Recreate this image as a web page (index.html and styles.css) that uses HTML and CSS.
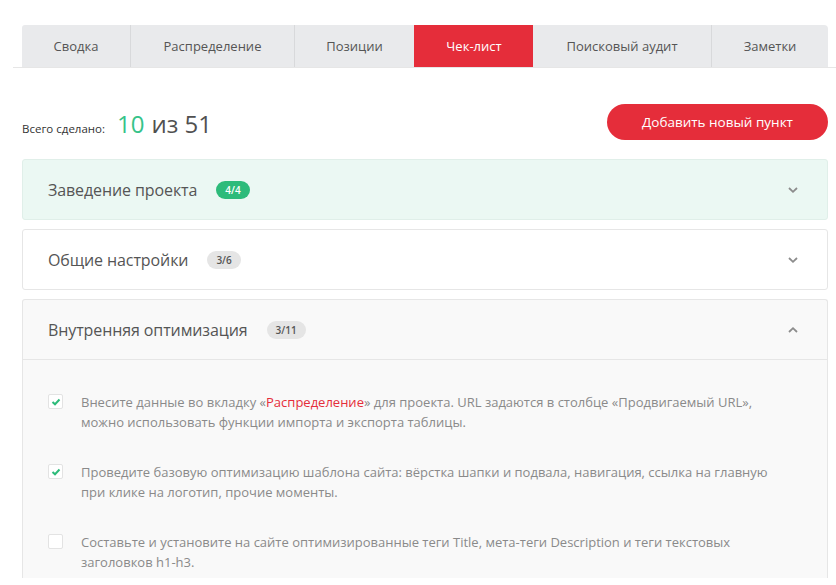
FILE: index.html
```html
<!DOCTYPE html>
<html lang="ru">
<head>
<meta charset="utf-8">
<link rel="stylesheet" href="styles.css">
</head>
<body>
<div class="page">
  <div class="tabs-bar">
    <div class="tabs">
      <div class="tab t1">Сводка</div>
      <div class="tab t2">Распределение</div>
      <div class="tab t3">Позиции</div>
      <div class="tab t4 active">Чек-лист</div>
      <div class="tab t5">Поисковый аудит</div>
      <div class="tab t6">Заметки</div>
    </div>
  </div>
  <div class="content">
    <div class="summary">
      <div class="total">
        <span class="total-label">Всего сделано:</span>
        <span class="total-done">10</span>
        <span class="total-all">из 51</span>
      </div>
      <button class="add-btn">Добавить новый пункт</button>
    </div>

    <div class="panel panel-done">
      <div class="panel-head">
        <span class="panel-title">Заведение проекта</span>
        <span class="badge badge-green">4/4</span>
        <svg class="chev" width="12" height="8" viewBox="0 0 12 8"><path d="M2 2 L6 5.8 L10 2" fill="none" stroke="#8c8c8c" stroke-width="1.8"/></svg>
      </div>
    </div>

    <div class="panel">
      <div class="panel-head">
        <span class="panel-title">Общие настройки</span>
        <span class="badge">3/6</span>
        <svg class="chev" width="12" height="8" viewBox="0 0 12 8"><path d="M2 2 L6 5.8 L10 2" fill="none" stroke="#8c8c8c" stroke-width="1.8"/></svg>
      </div>
    </div>

    <div class="panel panel-open">
      <div class="panel-head">
        <span class="panel-title">Внутренняя оптимизация</span>
        <span class="badge">3/11</span>
        <svg class="chev" width="12" height="8" viewBox="0 0 12 8"><path d="M2 6 L6 2.2 L10 6" fill="none" stroke="#8c8c8c" stroke-width="1.8"/></svg>
      </div>
      <div class="panel-body">
        <div class="item">
          <span class="check checked"><svg width="10" height="8" viewBox="0 0 10 8"><path d="M1.5 4 L4 6.3 L8.5 1.5" fill="none" stroke="#2dbb7a" stroke-width="2"/></svg></span>
          <p class="item-text">Внесите данные во вкладку «<a class="link">Распределение</a>» для проекта. URL задаются в столбце «Продвигаемый URL», можно использовать функции импорта и экспорта таблицы.</p>
        </div>
        <div class="item">
          <span class="check checked"><svg width="10" height="8" viewBox="0 0 10 8"><path d="M1.5 4 L4 6.3 L8.5 1.5" fill="none" stroke="#2dbb7a" stroke-width="2"/></svg></span>
          <p class="item-text">Проведите базовую оптимизацию шаблона сайта: вёрстка шапки и подвала, навигация, ссылка на главную при клике на логотип, прочие моменты.</p>
        </div>
        <div class="item">
          <span class="check"></span>
          <p class="item-text">Составьте и установите на сайте оптимизированные теги Title, мета-теги Description и теги текстовых заголовков h1-h3.</p>
        </div>
      </div>
    </div>
  </div>
</div>
</body>
</html>
```

FILE: styles.css
```css
* { box-sizing: border-box; }
html, body { margin: 0; padding: 0; background: #fff; }
body {
  font-family: "Open Sans", "Liberation Sans", sans-serif;
  color: #555;
  width: 836px;
  height: 585px;
  overflow: hidden;
}
.page { height: 578px; overflow: hidden; }

.tabs-bar {
  margin-left: 13px;
  padding-top: 25px;
  padding-left: 9px;
  border-bottom: 1px solid #e6e6e6;
}
.tabs { display: flex; width: 806px; }
.tab {
  height: 42px;
  display: flex;
  align-items: center;
  justify-content: center;
  background: #e9eaec;
  font-size: 13px;
  color: #555;
  border-left: 1px solid #d8d9db;
}
.tab.t1 { width: 108px; border-left: none; border-top-left-radius: 3px; }
.tab.t2 { width: 164px; }
.tab.t3 { width: 120px; }
.tab.t4 { width: 119px; }
.tab.t5 { width: 178px; border-left: none; }
.tab.t6 { width: 117px; border-top-right-radius: 4px; }
.tab.active { background: #e52d3a; color: #fff; border-left-color: #e52d3a; }

.content { padding: 0 8px 0 22px; }

.summary {
  display: flex;
  justify-content: space-between;
  align-items: center;
  margin-top: 36px;
  height: 36px;
}
.total { display: flex; align-items: baseline; padding-top: 2px; }
.total-label { font-size: 11.5px; color: #333; margin-right: 12px; }
.total-done { font-size: 24px; color: #36c38a; margin-right: 7px; }
.total-all { font-size: 24px; color: #505050; }
.add-btn {
  width: 221px;
  height: 36px;
  border: none;
  border-radius: 18px;
  background: #e52d3a;
  color: #fff;
  font-family: inherit;
  font-size: 13.5px;
  padding: 0;
}

.panel {
  margin-top: 9px;
  border: 1px solid #e6e6e6;
  border-radius: 3px;
  background: #fff;
}
.summary + .panel { margin-top: 19px; }
.panel-done { background: #ebf8f3; border-color: #e0efe9; }
.panel-open { background: #f9f9f9; border-bottom: none; border-radius: 3px 3px 0 0; }
.panel-head {
  height: 59px;
  display: flex;
  align-items: center;
  padding: 0 28px 0 25px;
}
.panel-title { font-size: 16px; color: #555; letter-spacing: -0.1px; }
.badge {
  margin-left: 19px;
  height: 18px;
  line-height: 18px;
  padding: 0 9px;
  border-radius: 9px;
  background: #e5e5e5;
  color: #555;
  font-size: 10px;
  font-weight: 600;
}
.badge-green { background: #2dbb7a; color: #fff; }
.chev { margin-left: auto; }

.panel-body {
  border-top: 1px solid #e6e6e6;
  padding: 32px 38px 40px 25px;
}
.item { display: flex; align-items: flex-start; margin-bottom: 30px; }
.check {
  flex: none;
  width: 15px;
  height: 15px;
  margin-top: 2px;
  margin-right: 18px;
  background: #fff;
  border: 1px solid #e3e3e3;
  border-radius: 2px;
  display: flex;
  align-items: center;
  justify-content: center;
}
.item-text {
  margin: 0;
  font-size: 13px;
  line-height: 20px;
  color: #8a8a8a;
}
.link { color: #e52d3a; }
```
